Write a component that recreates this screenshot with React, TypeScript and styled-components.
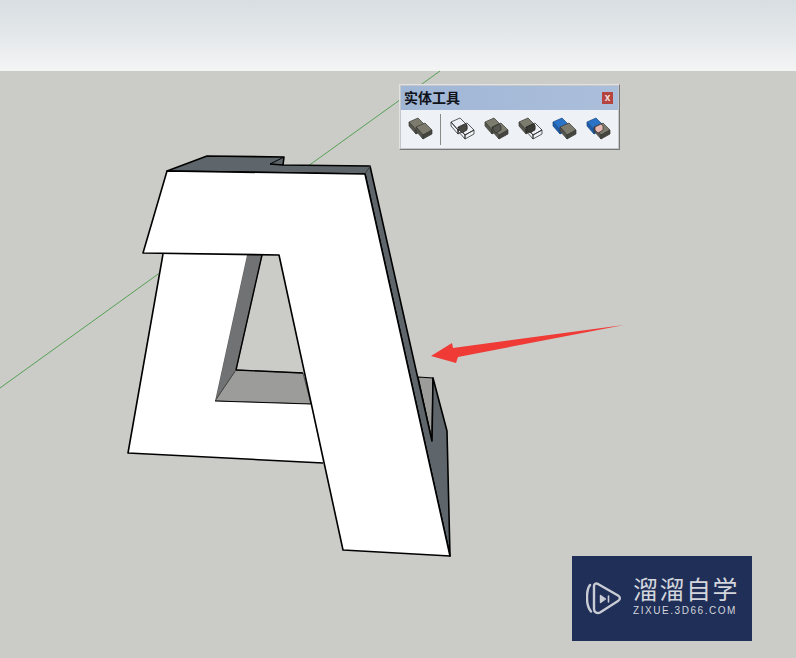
import styled, { createGlobalStyle } from "styled-components";

const GlobalStyle = createGlobalStyle`
  html, body {
    margin: 0;
    padding: 0;
    height: 100%;
    overflow: hidden;
  }
  #root {
    height: 100%;
  }
`;

const Viewport = styled.div`
  position: relative;
  display: flex;
  flex-direction: column;
  width: 796px;
  height: 658px;
  overflow: hidden;
  font-family: "Liberation Sans", "Noto Sans CJK SC", sans-serif;
`;

const Sky = styled.div`
  height: 71px;
  flex: none;
  background: linear-gradient(180deg, #d8dee2 0%, #e4e8ea 50%, #f4f4f5 100%);
`;

const Ground = styled.div`
  flex: 1;
  background: #cbcbc7;
`;

const ModelLayer = styled.svg`
  position: absolute;
  inset: 0;
`;

const Toolbar = styled.div`
  position: absolute;
  left: 399px;
  top: 84px;
  width: 221px;
  height: 66px;
  box-sizing: border-box;
  padding: 1px;
  border: 1px solid #e2e2e2;
  border-right-color: #777;
  border-bottom-color: #777;
  background: #c4c8cd;
  display: flex;
  flex-direction: column;
`;

const TitleBar = styled.div`
  height: 24px;
  flex: none;
  display: flex;
  align-items: center;
  justify-content: space-between;
  padding: 0 5px 0 3px;
  background: linear-gradient(90deg, #a0b6d5, #abbfdb);
`;

const Title = styled.span`
  font-size: 14px;
  font-weight: 700;
  color: #10131a;
  line-height: 1;
`;

const CloseButton = styled.span`
  width: 11px;
  height: 12px;
  display: flex;
  align-items: center;
  justify-content: center;
  background: #b5443f;
  color: #f3e4e2;
  font-size: 10px;
  font-weight: 700;
  line-height: 1;
`;

const IconRow = styled.div`
  flex: 1;
  display: flex;
  align-items: center;
  gap: 8px;
  padding-left: 6px;
  background: #eef1f5;
`;

const ToolIcon = styled.svg`
  width: 26px;
  height: 24px;
  flex: none;
`;

const Divider = styled.span`
  width: 1px;
  height: 31px;
  flex: none;
  margin-left: -1px;
  background: #8a8a8a;
`;

const Watermark = styled.div`
  position: absolute;
  left: 572px;
  top: 556px;
  width: 180px;
  height: 85px;
  display: flex;
  align-items: center;
  gap: 11px;
  padding-left: 14px;
  box-sizing: border-box;
  background: #202f58;
  color: #d3d6dc;
`;

const BrandText = styled.div`
  display: flex;
  flex-direction: column;
  align-items: flex-start;
  padding-bottom: 4px;
`;

const BrandName = styled.span`
  font-size: 25px;
  line-height: 29px;
  letter-spacing: 1.5px;
  white-space: nowrap;
`;

const BrandUrl = styled.span`
  font-size: 10px;
  line-height: 12px;
  letter-spacing: 1.55px;
  white-space: nowrap;
`;

type Tone = "solid" | "wire" | "blue";

const palettes = {
  solid: { top: "#7c7b6e", left: "#56564e", right: "#45453f", line: "#3a3a35" },
  wire: { top: "none", left: "none", right: "none", line: "#1a1a1a" },
  blue: { top: "#2a72c6", left: "#1c5cab", right: "#154d92", line: "#174a84" },
};

// one slab of the solid tools icon: top, left side, right side
function Slab({ x, y, tone }: { x: number; y: number; tone: Tone }) {
  const colors = palettes[tone];
  return (
    <g stroke={colors.line} strokeWidth="0.7" strokeLinejoin="round">
      <path d={`M${x} ${y + 4}l9-4 7 7-9 5z`} fill={colors.top} />
      <path d={`M${x} ${y + 4}l7 8v4l-7-8z`} fill={colors.left} />
      <path d={`M${x + 7} ${y + 12}l9-5v4l-9 5z`} fill={colors.right} />
    </g>
  );
}

interface SolidIconProps {
  back?: Tone;
  front?: Tone;
  overlap?: string;
}

function SolidIcon({ back = "solid", front = "solid", overlap }: SolidIconProps) {
  return (
    <ToolIcon viewBox="0 0 26 24">
      <Slab x={2} y={1} tone={back} />
      <Slab x={9} y={6} tone={front} />
      {overlap && <path d="M10 10l6-3 2 2v4l-5 3-3-3z" fill={overlap} stroke="#222" strokeWidth="0.6" />}
    </ToolIcon>
  );
}

export default function App() {
  return (
    <>
      <GlobalStyle />
      <Viewport>
        <Sky />
        <Ground />
        <ModelLayer width="796" height="658" viewBox="0 0 796 658">
          <line x1="0" y1="388" x2="440" y2="71" stroke="#55a155" strokeWidth="1" />
          <polygon points="418,377 433,378 432,441" fill="#9c9c9a" stroke="#000" strokeWidth="1.2" />
          <polygon
            points="167,171 207,156 284,157 283,165 370,166 432,441 433,378 447,431 450,556 365,174"
            fill="#5f666b"
            stroke="#000"
            strokeWidth="1.6"
            strokeLinejoin="round"
          />
          <line x1="370" y1="166" x2="365" y2="174" stroke="#3c4044" />
          <line x1="270" y1="164" x2="284" y2="157" stroke="#000" strokeWidth="1" />
          <line x1="270" y1="164" x2="283" y2="165" stroke="#000" strokeWidth="1.4" />
          <polygon points="247,255 262,255 236,370 215,401" fill="#717273" stroke="#555" strokeWidth="0.8" />
          <polygon points="236,370 303,373 311,404 215,401" fill="#9c9c9a" stroke="#333" strokeWidth="0.8" />
          <line x1="262" y1="255" x2="236" y2="370" stroke="#000" strokeWidth="1.4" />
          <line x1="236" y1="370" x2="303" y2="373" stroke="#000" strokeWidth="1.4" />
          <g stroke="#000" strokeWidth="1.6" strokeLinejoin="round">
            <polygon points="163,254 247,255 215,401 311,404 323,463 128,453" fill="#fff" stroke="none" />
            <path d="M163 254L128 453L323 463" fill="none" />
            <line x1="215" y1="401" x2="311" y2="404" strokeWidth="1" />
            <polygon points="167,171 365,174 450,556 343,550 279,255 143,253" fill="#fff" />
          </g>
          <polygon points="431,356 452,343 453,348 624,325 458,357 456,363" fill="#ef3a36" />
        </ModelLayer>
        <Toolbar>
          <TitleBar>
            <Title>实体工具</Title>
            <CloseButton>x</CloseButton>
          </TitleBar>
          <IconRow>
            <SolidIcon />
            <Divider />
            <SolidIcon back="wire" front="wire" overlap="#4a4a44" />
            <SolidIcon overlap="#56564e" />
            <SolidIcon front="wire" overlap="#3a3a35" />
            <SolidIcon back="blue" />
            <SolidIcon back="blue" overlap="#e8b9b2" />
          </IconRow>
        </Toolbar>
        <Watermark>
          <svg
            width="36"
            height="34"
            viewBox="0 0 36 34"
            fill="none"
            stroke="#c9ccd4"
            strokeWidth="2.4"
            strokeLinejoin="round"
            strokeLinecap="round"
          >
            <path d="M4 3C1.5 6 1 9 1 16C1 23 2 26 5 29.5" />
            <path d="M8 4C8 2 10 .8 12 2L32 13.5C34.5 15 34.5 17.5 32 19L14 30.5C11 32 8 30 8 27Z" />
            <path d="M14.5 13.5v7l5-3.5z" strokeWidth="1.4" fill="#c9ccd4" />
            <path d="M22.5 14v6" strokeWidth="1.6" />
          </svg>
          <BrandText>
            <BrandName>溜溜自学</BrandName>
            <BrandUrl>ZIXUE.3D66.COM</BrandUrl>
          </BrandText>
        </Watermark>
      </Viewport>
    </>
  );
}
